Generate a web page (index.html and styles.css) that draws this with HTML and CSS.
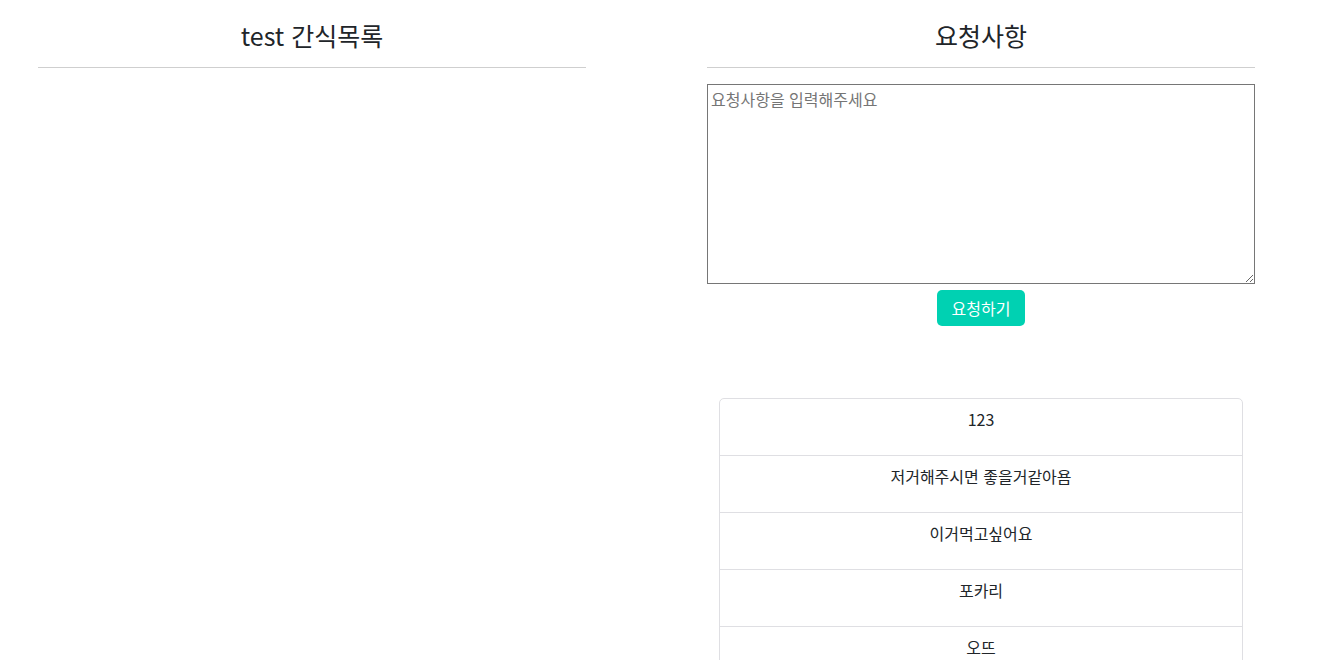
FILE: index.html
```html
<!DOCTYPE html>
<html lang="ko">

<head>
    <meta charset="utf-8">
    <meta name="viewport" content="width=device-width, initial-scale=1.0">
    <title>간식</title>
    <link rel="stylesheet" href="styles.css">
</head>

<body>

    <div class="wrap">

        <!-- 간식목록 -->
        <section class="col">
            <h2 class="title">test 간식목록</h2>
            <hr>
            <div id="snackList"></div>
        </section>

        <!-- 요청사항 -->
        <section class="col">
            <h2 class="title">요청사항</h2>
            <hr>
            <textarea id="request" placeholder="요청사항을 입력해주세요"></textarea>
            <div class="btnbox">
                <button class="btn">요청하기</button>
            </div>

            <ul class="reqlist">
                <li><p>123</p></li>
                <li><p>저거해주시면 좋을거같아욤</p></li>
                <li><p>이거먹고싶어요</p></li>
                <li><p>포카리</p></li>
                <li><p>오뜨</p></li>
            </ul>
        </section>

    </div>

</body>

</html>
```

FILE: styles.css
```css
body {
    margin: 0;
    font-family: "Noto Sans CJK KR", "Noto Sans", sans-serif;
    color: #212529;
    background: #fff;
}

.wrap {
    display: flex;
    gap: 121px;
    padding-left: 38px;
}

.col {
    width: 548px;
    flex: none;
}

.title {
    margin: 0;
    padding-top: 18px;
    height: 43px;
    line-height: 34px;
    font-size: 25px;
    font-weight: 400;
    text-align: center;
}

hr {
    margin: 6px 0 16px;
    border: 0;
    border-top: 1px solid #cfcfcf;
}

textarea {
    display: block;
    width: 548px;
    height: 200px;
    box-sizing: border-box;
    margin: 0;
    padding: 2px 3px;
    border: 1px solid #767676;
    font-family: "Noto Sans CJK KR", "Noto Sans", sans-serif;
    font-size: 16px;
    line-height: 24px;
    resize: vertical;
}

textarea::placeholder {
    color: #757575;
}

.btnbox {
    text-align: center;
    padding-top: 6px;
}

.btn {
    background-color: #00d1b2;
    color: #fff;
    border: 0;
    border-radius: 5px;
    width: 88px;
    height: 36px;
    font-family: "Noto Sans CJK KR", "Noto Sans", sans-serif;
    font-size: 16px;
    cursor: pointer;
}

.reqlist {
    list-style: none;
    margin: 72px 12px 0;
    padding: 0;
    border: 1px solid #dfdfe3;
    border-radius: 5px;
}

.reqlist li {
    padding: 8px 16px;
    border-top: 1px solid #dfdfe3;
    text-align: center;
}

.reqlist li:first-child {
    border-top: 0;
}

.reqlist p {
    margin: 0 0 16px;
    font-size: 16px;
    line-height: 24px;
}
```
